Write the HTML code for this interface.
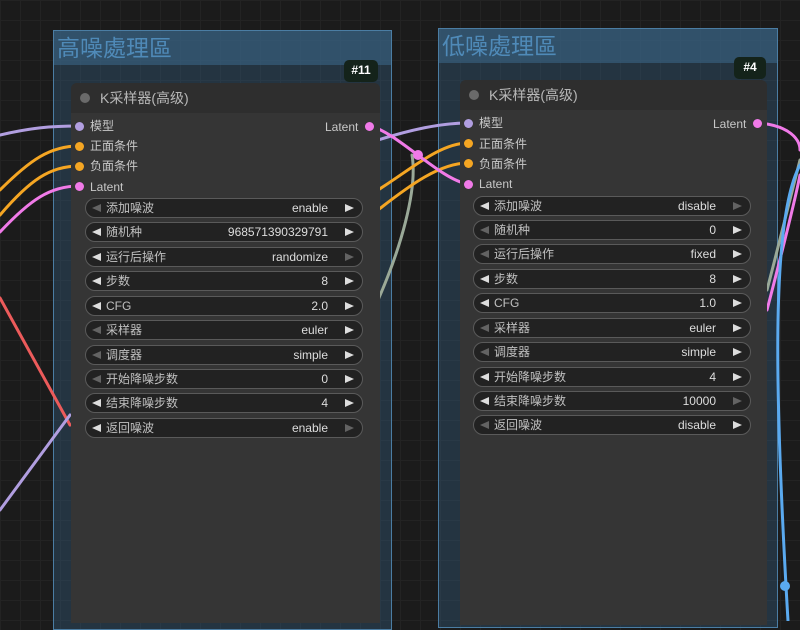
<!DOCTYPE html>
<html><head><meta charset="utf-8"><style>
*{margin:0;padding:0;box-sizing:border-box}
body{width:800px;height:621px;overflow:hidden;position:relative;background:#1b1b1b;font-family:"Liberation Sans","Noto Sans CJK SC",sans-serif;
background-image:linear-gradient(#232323 1px,transparent 1px),linear-gradient(90deg,#232323 1px,transparent 1px);background-size:20px 20px;}
.grp{position:absolute;border:1px solid #4b7da3;background:rgba(48,84,112,0.45)}
.grp .h{height:34px;background:rgba(60,105,140,0.55);color:#4f8ab8;font-size:23px;padding:0 3px;font-family:"Noto Sans CJK SC",sans-serif;line-height:30px}
.node{position:absolute;background:#353535;border-radius:6px 6px 0 0}
.node .t{height:30px;background:#2e2e2e;border-radius:6px 6px 0 0;color:#b8b8b8;font-size:14px;line-height:30px;padding-left:29px;position:relative}
.node .t:before{content:"";position:absolute;left:9px;top:10px;width:10px;height:10px;border-radius:50%;background:#6a6a6a}
.io{position:absolute;font-size:12px;color:#c8c8c8;line-height:14px}
.dot{position:absolute;width:9px;height:9px;border-radius:50%}
.w{position:absolute;height:20px;border:1px solid #5a5a5a;border-radius:10px;background:#222;color:#c0c0c0;font-size:12px;line-height:18px}
.w .l{position:absolute;left:20px}.w .v{position:absolute;right:34px;color:#ddd}
.w .a,.w .b{position:absolute;top:5px;width:0;height:0;border-top:4.5px solid transparent;border-bottom:4.5px solid transparent}
.w .a{left:6px;border-right:9px solid #ddd}.w .b{right:8px;border-left:9px solid #ddd}
.w .d{opacity:.35}
.badge{position:absolute;background:#14231a;color:#fff;font-weight:bold;font-size:12px;border-radius:5px;text-align:center;line-height:20px;height:22px}
</style></head><body>
<div class="grp" style="left:53px;top:30px;width:339px;height:600px"><div class="h">高噪處理區</div></div>
<div class="grp" style="left:438px;top:28px;width:340px;height:600px"><div class="h">低噪處理區</div></div>
<div class="badge" style="left:344px;top:60px;width:34px">#11</div>
<div class="badge" style="left:734px;top:57px;width:32px">#4</div>

<svg width="800" height="621" style="position:absolute;left:0;top:0" fill="none" stroke-width="3" stroke-linecap="round">
<path d="M0,135 C30,128 50,126 79,126" stroke="#b19ee0"/>
<path d="M0,190 C30,160 50,146 79,146" stroke="#f5a623"/>
<path d="M0,215 C30,180 50,166 79,166" stroke="#f5a623"/>
<path d="M0,232 C30,200 50,186 79,186" stroke="#f07ae8"/>
<path d="M0,298 L70,425" stroke="#ec5b5b"/>
<path d="M0,510 L70,415" stroke="#b19ee0"/>
<path d="M378,300 C400,250 418,190 412,155" stroke="#9aa998"/>
<path d="M378,140 C410,130 440,123 468,123" stroke="#b19ee0"/>
<path d="M378,190 C410,170 440,143 468,143" stroke="#f5a623"/>
<path d="M378,210 C410,185 440,163 468,163" stroke="#f5a623"/>
<path d="M369,126 C395,130 440,180 468,184" stroke="#f07ae8"/>
<circle cx="418" cy="155" r="5" fill="#f07ae8" stroke="none"/>
<path d="M757,123 C790,125 800,140 800,150" stroke="#f07ae8"/>
<path d="M767,290 C780,240 795,180 800,160" stroke="#9aa998"/>
<path d="M767,310 C780,260 795,200 800,175" stroke="#f07ae8"/>
<path d="M800,165 C770,220 775,400 788,621" stroke="#5aaaf0"/>
<circle cx="785" cy="586" r="5" fill="#5aaaf0" stroke="none"/>
</svg>

<div class="node" style="left:71px;top:83px;width:309px;height:540px">
<div class="t">K采样器(高级)</div>
</div>
<div class="node" style="left:460px;top:80px;width:307px;height:545px">
<div class="t">K采样器(高级)</div>
</div>

<div class="dot" style="left:75px;top:122px;background:#b19ee0"></div><div class="io" style="left:90px;top:119px">模型</div>
<div class="dot" style="left:75px;top:142px;background:#f5a623"></div><div class="io" style="left:90px;top:139px">正面条件</div>
<div class="dot" style="left:75px;top:162px;background:#f5a623"></div><div class="io" style="left:90px;top:159px">负面条件</div>
<div class="dot" style="left:75px;top:182px;background:#f07ae8"></div><div class="io" style="left:90px;top:180px">Latent</div>
<div class="io" style="left:325px;top:120px">Latent</div><div class="dot" style="left:365px;top:122px;background:#f07ae8"></div>

<div class="dot" style="left:464px;top:119px;background:#b19ee0"></div><div class="io" style="left:479px;top:116px">模型</div>
<div class="dot" style="left:464px;top:139px;background:#f5a623"></div><div class="io" style="left:479px;top:137px">正面条件</div>
<div class="dot" style="left:464px;top:159px;background:#f5a623"></div><div class="io" style="left:479px;top:157px">负面条件</div>
<div class="dot" style="left:464px;top:180px;background:#f07ae8"></div><div class="io" style="left:479px;top:177px">Latent</div>
<div class="io" style="left:713px;top:117px">Latent</div><div class="dot" style="left:753px;top:119px;background:#f07ae8"></div>

<div class="w" style="left:85px;top:198px;width:278px"><i class="a d"></i><span class="l">添加噪波</span><span class="v">enable</span><i class="b"></i></div>
<div class="w" style="left:85px;top:222px;width:278px"><i class="a"></i><span class="l">随机种</span><span class="v">968571390329791</span><i class="b"></i></div>
<div class="w" style="left:85px;top:247px;width:278px"><i class="a"></i><span class="l">运行后操作</span><span class="v">randomize</span><i class="b d"></i></div>
<div class="w" style="left:85px;top:271px;width:278px"><i class="a"></i><span class="l">步数</span><span class="v">8</span><i class="b"></i></div>
<div class="w" style="left:85px;top:296px;width:278px"><i class="a"></i><span class="l">CFG</span><span class="v">2.0</span><i class="b"></i></div>
<div class="w" style="left:85px;top:320px;width:278px"><i class="a d"></i><span class="l">采样器</span><span class="v">euler</span><i class="b"></i></div>
<div class="w" style="left:85px;top:345px;width:278px"><i class="a d"></i><span class="l">调度器</span><span class="v">simple</span><i class="b"></i></div>
<div class="w" style="left:85px;top:369px;width:278px"><i class="a d"></i><span class="l">开始降噪步数</span><span class="v">0</span><i class="b"></i></div>
<div class="w" style="left:85px;top:393px;width:278px"><i class="a"></i><span class="l">结束降噪步数</span><span class="v">4</span><i class="b"></i></div>
<div class="w" style="left:85px;top:418px;width:278px"><i class="a"></i><span class="l">返回噪波</span><span class="v">enable</span><i class="b d"></i></div>

<div class="w" style="left:473px;top:196px;width:278px"><i class="a"></i><span class="l">添加噪波</span><span class="v">disable</span><i class="b d"></i></div>
<div class="w" style="left:473px;top:220px;width:278px"><i class="a d"></i><span class="l">随机种</span><span class="v">0</span><i class="b"></i></div>
<div class="w" style="left:473px;top:244px;width:278px"><i class="a d"></i><span class="l">运行后操作</span><span class="v">fixed</span><i class="b"></i></div>
<div class="w" style="left:473px;top:269px;width:278px"><i class="a"></i><span class="l">步数</span><span class="v">8</span><i class="b"></i></div>
<div class="w" style="left:473px;top:293px;width:278px"><i class="a"></i><span class="l">CFG</span><span class="v">1.0</span><i class="b"></i></div>
<div class="w" style="left:473px;top:318px;width:278px"><i class="a d"></i><span class="l">采样器</span><span class="v">euler</span><i class="b"></i></div>
<div class="w" style="left:473px;top:342px;width:278px"><i class="a d"></i><span class="l">调度器</span><span class="v">simple</span><i class="b"></i></div>
<div class="w" style="left:473px;top:367px;width:278px"><i class="a"></i><span class="l">开始降噪步数</span><span class="v">4</span><i class="b"></i></div>
<div class="w" style="left:473px;top:391px;width:278px"><i class="a"></i><span class="l">结束降噪步数</span><span class="v">10000</span><i class="b d"></i></div>
<div class="w" style="left:473px;top:415px;width:278px"><i class="a d"></i><span class="l">返回噪波</span><span class="v">disable</span><i class="b"></i></div>
</body></html>
